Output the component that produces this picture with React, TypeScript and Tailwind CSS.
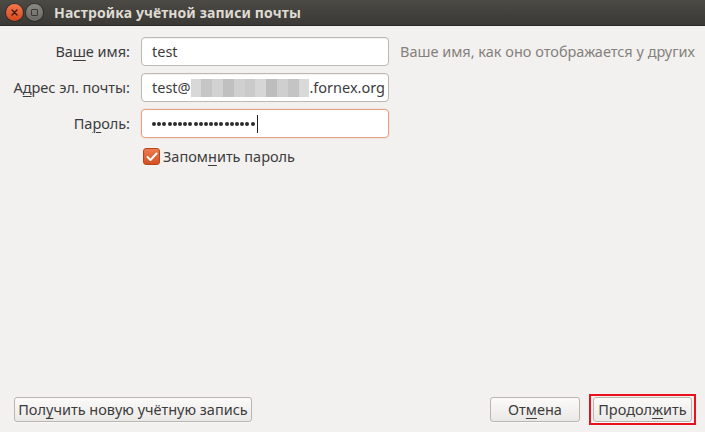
import React from "react";

const font = { fontFamily: '"Noto Sans", "DejaVu Sans", sans-serif' };

function U({ children }: { children: React.ReactNode }) {
  return <span className="underline underline-offset-[3px] decoration-1">{children}</span>;
}

function Btn({ children, className = "" }: { children: React.ReactNode; className?: string }) {
  return (
    <button
      className={`h-[25px] rounded-[3px] border border-[#b9b5b0] bg-gradient-to-b from-[#fbfaf9] to-[#ebe9e6] text-[14.5px] text-[#3c3c3c] leading-none shadow-[0_1px_0_rgba(255,255,255,0.6)] ${className}`}
    >
      {children}
    </button>
  );
}

const blur = ["#d8d8d8", "#c6c6c6", "#d2d2d2", "#c0c0c0", "#d0d0d0", "#cacaca", "#d6d6d6", "#bdbdbd", "#cfcfcf", "#c4c4c4", "#d9d9d9"];

export default function App() {
  return (
    <div className="w-[705px] h-[432px] flex flex-col bg-[#f2f1f0] overflow-hidden" style={font}>
      {/* Title bar */}
      <div className="h-[26px] flex items-center bg-gradient-to-b from-[#4b4a45] to-[#3a3935] border-b border-[#2b2a27]">
        <div className="ml-[6px] w-[17px] h-[17px] rounded-full bg-gradient-to-b from-[#f4774a] to-[#d8461d] flex items-center justify-center shadow-[0_0_0_1px_rgba(0,0,0,0.3)]">
          <svg width="7" height="7" viewBox="0 0 7 7">
            <path d="M1 1 L6 6 M6 1 L1 6" stroke="#3b1a0e" strokeWidth="1.4" strokeLinecap="round" />
          </svg>
        </div>
        <div className="ml-[3px] w-[17px] h-[17px] rounded-full bg-gradient-to-b from-[#8a8984] to-[#6a6964] flex items-center justify-center shadow-[0_0_0_1px_rgba(0,0,0,0.3)]">
          <div className="w-[7px] h-[7px] border border-[#3a3935] rounded-[1px]" />
        </div>
        <span className="ml-[11px] text-[14px] font-bold text-[#dfdbd2] tracking-[0.1px]">
          Настройка учётной записи почты
        </span>
      </div>

      {/* Form */}
      <div className="grid grid-cols-[130px_248px_auto] gap-x-[11px] gap-y-[7px] pt-[11px] items-center text-[14.5px] text-[#3c3c3c]">
        <div className="text-right">
          Ва<U>ш</U>е имя:
        </div>
        <div className="h-[29px] rounded-[4px] border border-[#bcb8b2] bg-white flex items-center px-[10px] shadow-[inset_0_1px_1px_rgba(0,0,0,0.06)]">
          test
        </div>
        <div className="text-[#85807b] whitespace-nowrap">Ваше имя, как оно отображается у других</div>

        <div className="text-right whitespace-nowrap">
          А<U>д</U>рес эл. почты:
        </div>
        <div className="h-[29px] rounded-[4px] border border-[#bcb8b2] bg-white flex items-center pl-[10px] overflow-hidden whitespace-nowrap shadow-[inset_0_1px_1px_rgba(0,0,0,0.06)]">
          <span>test@</span>
          <span className="flex h-[18px] shrink-0">
            {blur.map((c, i) => (
              <span key={i} className="w-[10.8px] h-full shrink-0" style={{ background: c }} />
            ))}
          </span>
          <span>.fornex.org</span>
        </div>
        <div />

        <div className="text-right">
          Па<U>р</U>оль:
        </div>
        <div className="h-[29px] rounded-[4px] border border-[#e5a184] bg-white flex items-center px-[10px] shadow-[0_0_0_1px_rgba(233,84,32,0.08)]">
          <span className="flex gap-[1.2px]">
            {Array.from({ length: 20 }).map((_, i) => (
              <span key={i} className="w-[4px] h-[4px] rounded-full bg-[#2c2c2c]" />
            ))}
          </span>
          <span className="ml-[2px] w-px h-[18px] bg-[#222]" />
        </div>
        <div />

        <div />
        <div className="flex items-center h-[23px]">
          <div className="ml-[2px] w-[17px] h-[17px] rounded-[3px] bg-gradient-to-b from-[#ef7a4f] to-[#d4501f] border border-[#b8461c] flex items-center justify-center">
            <svg width="12" height="10" viewBox="0 0 12 10">
              <path d="M1.5 5 L4.5 8 L10.5 1.5" fill="none" stroke="#fff" strokeWidth="2" strokeLinecap="round" strokeLinejoin="round" />
            </svg>
          </div>
          <span className="ml-[3px]">
            Запом<U>н</U>ить пароль
          </span>
        </div>
        <div />
      </div>

      {/* Buttons */}
      <div className="mt-auto flex items-center pl-[14px] pr-[9px] pb-[7px]">
        <Btn className="w-[238px]">
          Пол<U>у</U>чить новую учётную запись
        </Btn>
        <div className="ml-auto flex items-center gap-[9px]">
          <Btn className="w-[90px]">
            От<U>м</U>ена
          </Btn>
          <div className="border-2 border-[#e8121c] px-[2px] py-[1px]">
            <Btn className="w-[99px] block">
              Продол<U>ж</U>ить
            </Btn>
          </div>
        </div>
      </div>
    </div>
  );
}
